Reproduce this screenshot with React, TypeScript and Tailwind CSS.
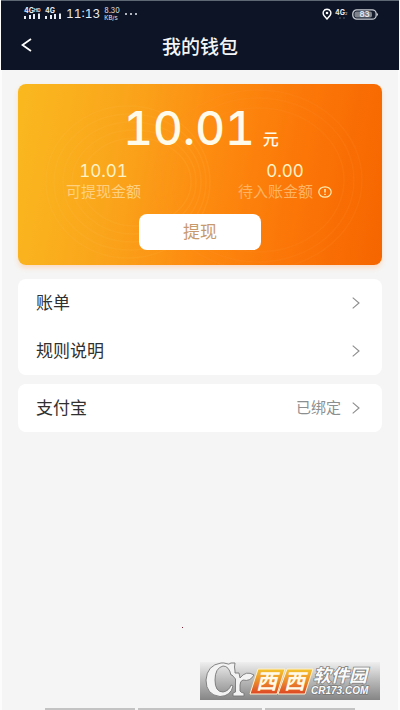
import React from "react";

const SignalBars = ({ label, x }: { label: string; x: number }) => (
  <g fill="#e8ebf0">
    <text x={x} y="6" fontSize="7" fontWeight="700" fontFamily="Inter, sans-serif">{label}</text>
    <rect x={x} y="9" width="2" height="3" />
    <rect x={x + 5} y="8" width="2" height="4" />
    <rect x={x + 9} y="7" width="2" height="5" />
    <rect x={x + 14} y="6.5" width="2" height="5.5" />
  </g>
);

function StatusBar() {
  return (
    <div className="flex h-[26px] items-center justify-between px-5 text-[#e8ebf0]">
      <div className="flex items-center pl-[2px]">
        <svg width="43" height="14" viewBox="0 0 43 14" aria-label="4G HD">
          <SignalBars label="4G" x={1} />
          <text x="11" y="4.5" fontSize="4.5" fontWeight="700" fill="#e8ebf0" fontFamily="Inter, sans-serif">HD</text>
          <SignalBars label="4G" x={22} />
        </svg>
        <span className="font-['Inter',sans-serif] text-[12px] leading-4 tabular-nums">11:13</span>
        <span className="ml-1 flex flex-col font-['Inter',sans-serif] text-[7px] leading-[7px]">
          <span className="tabular-nums">8.30</span>
          <span className="text-[6px]">KB/s</span>
        </span>
        <svg className="ml-1" width="14" height="4" viewBox="0 0 14 4" fill="currentColor" aria-hidden="true">
          <circle cx="2" cy="2" r="1" />
          <circle cx="7" cy="2" r="1" />
          <circle cx="12" cy="2" r="1" />
        </svg>
      </div>
      <div className="flex items-center">
        <svg width="10" height="12" viewBox="0 0 10 12" aria-hidden="true">
          <path d="M5 11 L2 7.5 C0 4.5 1.8 1.3 5 1.3 C8.2 1.3 10 4.5 8 7.5 Z" fill="none" stroke="#fff" strokeWidth="1.4" />
          <circle cx="5" cy="5" r="1.3" fill="#fff" />
        </svg>
        <svg className="ml-[3px]" width="14" height="13" viewBox="0 0 14 13" fill="#e8ebf0" aria-hidden="true">
          <text x="0" y="7" fontSize="7" fontWeight="700" fontFamily="Inter, sans-serif">4G</text>
          <text x="10" y="7" fontSize="4" fontFamily="Inter, sans-serif">2</text>
          <path d="M4 10h2M8 10h2" stroke="#59606d" />
        </svg>
        <svg className="ml-[3px]" width="27" height="11" viewBox="0 0 27 11" aria-label="83%">
          <rect x="0.8" y="0.8" width="23.4" height="9.4" rx="4" fill="#151d2d" stroke="#c9cdd3" strokeWidth="1.3" />
          <rect x="2.5" y="2.5" width="17.5" height="6" rx="2" fill="#7d828b" />
          <path d="M25 4 q2 1.5 0 3z" fill="#d9dce1" />
          <text x="12.5" y="8.3" textAnchor="middle" fontSize="8" fontWeight="600" fill="#e8ebf0" fontFamily="Inter, sans-serif">83</text>
        </svg>
      </div>
    </div>
  );
}

const Chevron = () => (
  <svg width="8" height="12" viewBox="0 0 8 12" fill="none" stroke="#8c8c8c" strokeWidth="1.1" aria-hidden="true">
    <path d="M.7.7 L7 6 L.7 11.3" />
  </svg>
);

function Row({ label, value }: { label: string; value?: string }) {
  return (
    <button type="button" className="flex h-12 w-full items-center justify-between pr-[22px] pl-[18px] text-left">
      <span className="pt-[2px] text-[17px] leading-6 text-[#303030]">{label}</span>
      <span className="flex items-center gap-[11px] text-[15px] leading-6 text-[#8c8f8f]">
        {value}
        <Chevron />
      </span>
    </button>
  );
}

function BalanceCard() {
  return (
    <section className="relative flex h-[181px] flex-col items-center overflow-hidden rounded-lg bg-[linear-gradient(100deg,#fab91f_0%,#faa51b_28%,#fd8b10_52%,#fb7507_76%,#f66500_100%)]">
      <svg className="absolute inset-0 h-full w-full" viewBox="0 0 364 181" preserveAspectRatio="none" fill="none" aria-hidden="true">
        <g stroke="#ffc04a" strokeOpacity=".13" strokeWidth="1.5">
          <ellipse cx="110" cy="98" rx="82" ry="76" />
          <ellipse cx="112" cy="98" rx="76" ry="68" />
          <ellipse cx="114" cy="98" rx="69" ry="60" />
          <ellipse cx="116" cy="98" rx="62" ry="52" />
          <ellipse cx="118" cy="98" rx="55" ry="44" />
        </g>
        <g stroke="#ff9630" strokeOpacity=".14" strokeWidth="1.5">
          <ellipse cx="240" cy="96" rx="104" ry="90" />
          <ellipse cx="240" cy="96" rx="96" ry="82" />
          <ellipse cx="240" cy="96" rx="86" ry="72" />
        </g>
      </svg>
      <div className="relative flex w-full flex-col items-center pt-[18px] text-[#fffbea]">
        <p className="flex h-[58px] items-baseline gap-2 pl-[2px]">
          <span className="font-['Inter',sans-serif] text-[46px] leading-[52px] font-medium tabular-nums">10.01</span>
          <span className="text-[16px] leading-6 font-medium">元</span>
        </p>
        <div className="flex w-full justify-between pr-[50px] pl-12">
          <div className="flex flex-col items-center">
            <span className="font-['Inter',sans-serif] text-[17px] leading-[22px] tabular-nums text-[#fff3c4]">10.01</span>
            <span className="text-[15px] leading-5 text-[#fed080]">可提现金额</span>
          </div>
          <div className="flex flex-col items-center">
            <span className="font-['Inter',sans-serif] text-[17px] leading-[22px] tabular-nums text-[#fff3c4]">0.00</span>
            <span className="flex items-center gap-[5px] text-[15px] leading-5 text-[#ffb463]">
              待入账金额
              <button type="button" aria-label="说明">
                <svg className="block" width="14" height="12" viewBox="0 0 14 12" fill="none" stroke="#fff0b8" strokeWidth="1.2">
                  <ellipse cx="7" cy="6" rx="6.2" ry="5.2" />
                  <path d="M7 3v3.6M7 7.8v1.3" strokeWidth="1.5" />
                </svg>
              </button>
            </span>
          </div>
        </div>
        <button type="button" className="mt-3 h-9 w-[122px] rounded-lg bg-white pt-[2px] text-[17px] leading-6 text-[#c99a6b]">提现</button>
      </div>
    </section>
  );
}

function Watermark() {
  return (
    <svg className="block" width="180" height="38" viewBox="0 0 180 38" aria-label="西西软件园 CR173.COM">
      <defs>
        <linearGradient id="plate" x1="0" y1="0" x2="0" y2="1">
          <stop offset="0" stopColor="#efefef" />
          <stop offset=".45" stopColor="#bdbdbd" />
          <stop offset="1" stopColor="#858585" />
        </linearGradient>
        <linearGradient id="tile" x1="0" y1="0" x2="0" y2="1">
          <stop offset="0" stopColor="#f4c52e" />
          <stop offset=".5" stopColor="#ec8a2a" />
          <stop offset="1" stopColor="#dc4525" />
        </linearGradient>
      </defs>
      <rect width="180" height="38" fill="url(#plate)" />
      <path
        d="M26 1.5 Q29 3 31 1 L35 1 Q34 5 35 9 L35 11 L39 11 L40 16 Q46 8 54 13 Q50 20 43 18 Q40 19 40 23 L40 29 Q41 31 44 31 L44 34 L33 34 L33 31 L35.500 30 L35.500 17 L32 13 L31 13 Q29 4 23 4 Q15 6 15 18 Q15 30 23 30 Q29 29 31 23 L33 24 Q31 34 20 34.500 Q6 33 6 18 Q7 3 21 1 Q24 .7 26 1.500 Z"
        fill="#f3f3f3"
        stroke="#777"
        strokeWidth=".9"
      />
      <path d="M58 7 H85 L77 32 H50 Z M87 7 H113 L105 32 H78 Z" fill="url(#tile)" stroke="#fff1cf" strokeWidth="1" />
      <g fontFamily="'Liberation Sans', 'Noto Sans CJK SC', sans-serif" fontStyle="italic" fontWeight="700" fill="#fafafa">
        <text x="56" y="27" fontSize="21" fill="#fff9e8">西</text>
        <text x="84" y="27" fontSize="21" fill="#fff9e8">西</text>
        <g stroke="#777" strokeWidth="1.4" paintOrder="stroke">
          <text x="113" y="20" fontSize="18">软件园</text>
          <text x="111" y="32" fontSize="10">CR173.COM</text>
        </g>
      </g>
    </svg>
  );
}

export default function App() {
  return (
    <div className="relative flex min-h-screen flex-col border-x-2 border-[#fcfcfc] bg-[#f5f5f5] font-['Liberation_Sans','Noto_Sans_CJK_SC',sans-serif]">
      <header className="-mx-[1px] border-t border-[#5e6875] bg-[#0c1425] pb-[7px]">
        <StatusBar />
        <div className="grid h-9 grid-cols-[48px_1fr_48px] items-center">
          <button type="button" aria-label="返回" className="flex h-full items-center pl-5">
            <svg width="11" height="14" viewBox="0 0 11 14" fill="none" stroke="#fff" strokeWidth="1.8" aria-hidden="true">
              <path d="M10 1 L1.5 7 L10 13" />
            </svg>
          </button>
          <h1 className="pt-[6px] text-center text-[19px] leading-6 font-medium text-[#f3f5f7]">我的钱包</h1>
        </div>
      </header>
      <main className="flex flex-col px-4 pt-[14px]">
        <div className="rounded-lg shadow-[0_3px_5px_#fbdcc4]">
          <BalanceCard />
        </div>
        <nav className="mt-[14px] rounded-lg bg-white">
          <Row label="账单" />
          <Row label="规则说明" />
        </nav>
        <nav className="mt-[9px] rounded-lg bg-white">
          <Row label="支付宝" value="已绑定" />
        </nav>
      </main>
      <span className="absolute bottom-[82px] left-[180px] h-px w-px bg-[#7d1f36]" />
      <div className="absolute right-[18px] bottom-[10px]">
        <Watermark />
      </div>
      <footer className="mt-auto flex justify-center gap-[3px]">
        <span className="h-[2px] w-[90px] bg-[#c3c3c3]" />
        <span className="h-[2px] w-[124px] bg-[#c3c3c3]" />
        <span className="h-[2px] w-[90px] bg-[#c3c3c3]" />
      </footer>
    </div>
  );
}
